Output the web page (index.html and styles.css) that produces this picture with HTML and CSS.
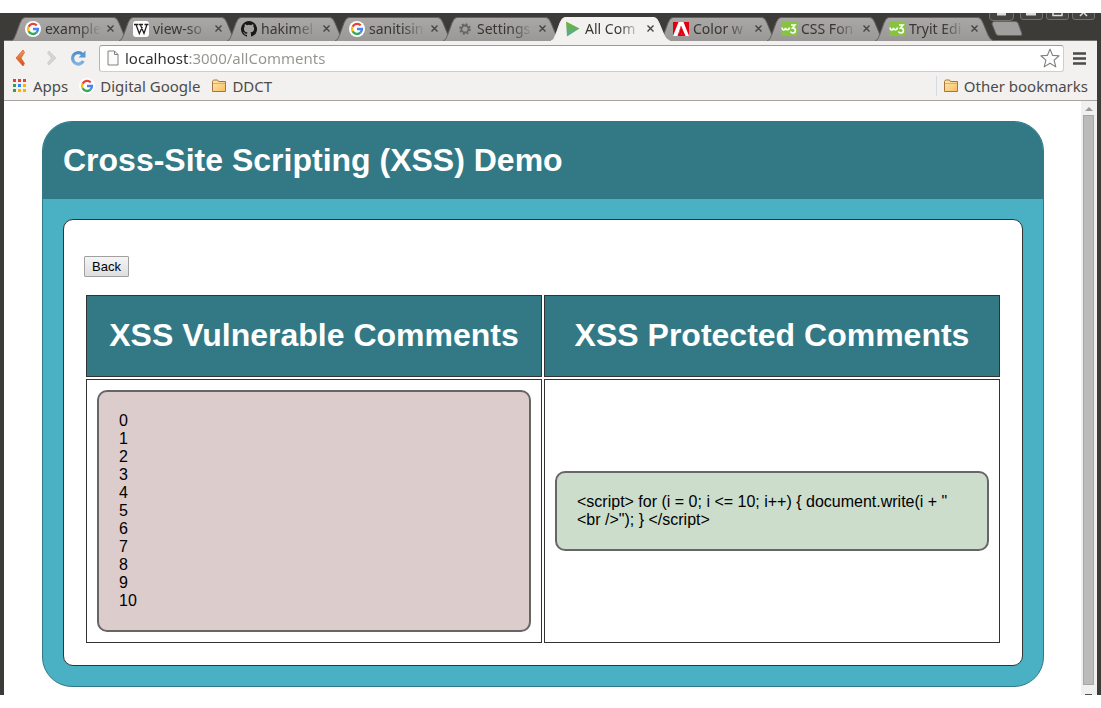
FILE: index.html
```html
<!DOCTYPE html>
<html lang="en">
<head>
<meta charset="utf-8">
<title>All Comments</title>
<link rel="stylesheet" href="styles.css">
</head>
<body>
<svg class="defs" aria-hidden="true">
  <defs>
    <linearGradient id="tabfill" x1="0" y1="0" x2="0" y2="1"><stop offset="0" stop-color="#a9a8a6"/><stop offset="1" stop-color="#999896"/></linearGradient>
    <linearGradient id="orange" x1="0" y1="0" x2="0" y2="1"><stop offset="0" stop-color="#f09a5c"/><stop offset="1" stop-color="#dc4a14"/></linearGradient>
    <linearGradient id="blue" x1="0" y1="0" x2="0" y2="1"><stop offset="0" stop-color="#4f8fcd"/><stop offset="1" stop-color="#82b1e0"/></linearGradient>
    <linearGradient id="folderfill" x1="0" y1="0" x2="1" y2="1"><stop offset="0" stop-color="#ffe9ae"/><stop offset="1" stop-color="#f8bd62"/></linearGradient>
    <linearGradient id="playfill" x1="0" y1="0" x2="0" y2="1"><stop offset="0" stop-color="#6db52d"/><stop offset="1" stop-color="#58a9a0"/></linearGradient>
  </defs>
  <symbol id="shape" viewBox="0 0 120 24"><path d="M0 24C3 23 3 21 5 17L9 6Q11 .5 14 .5H103Q106 .5 108 6L113 18Q115 23 119 24"/></symbol>
  <symbol id="google" viewBox="0 0 16 16"><circle cx="8" cy="8" r="8" fill="#fff"/><g fill="none" stroke-width="2.3"><path d="M11.7 4.4A5 5 0 0 0 3.6 5.8" stroke="#ea4335"/><path d="M3.6 5.8A5 5 0 0 0 3.6 10.3" stroke="#fbbc05"/><path d="M3.6 10.3A5 5 0 0 0 11.4 11.7" stroke="#34a853"/><path d="M11.4 11.7A5 5 0 0 0 13 8H8" stroke="#4285f4"/></g></symbol>
  <symbol id="wiki" viewBox="0 0 16 16"><rect width="16" height="16" rx="3" fill="#fff"/><path d="M1 3.5H5.5M6 3.5H10M11.5 3.5H15.500M3 3.500L6.300 12.500L9.300 6M7.300 3.500L11 12.500L14 3.500" fill="none" stroke="#222" stroke-width="1.300"/></symbol>
  <symbol id="github" viewBox="0 0 16 16"><path fill="#181818" fill-rule="evenodd" d="M8 0a8 8 0 0 0-2.530 15.590c.4.070.55-.17.55-.38v-1.490c-2.230.48-2.700-.95-2.700-.95-.36-.92-.89-1.170-.89-1.170-.73-.5.050-.49.050-.49.81.060 1.230.83 1.230.83.72 1.230 1.880.87 2.340.67.070-.52.280-.88.510-1.080-1.780-.2-3.640-.89-3.640-3.950 0-.87.310-1.590.82-2.150-.08-.2-.36-1.020.08-2.120 0 0 .67-.21 2.200.82a7.600 7.600 0 0 1 4 0c1.530-1.040 2.200-.82 2.200-.82.44 1.100.16 1.920.08 2.120.51.560.82 1.270.82 2.150 0 3.070-1.870 3.750-3.650 3.950.29.250.54.730.54 1.480v2.200c0 .21.150.46.550.38A8 8 0 0 0 8 0z"/></symbol>
  <symbol id="gear" viewBox="0 0 16 16"><g fill="none" stroke="#666564"><circle cx="8" cy="8" r="3.500" stroke-width="1.800"/><circle cx="8" cy="8" r="4.900" stroke-width="1.800" stroke-dasharray="2 1.850"/></g></symbol>
  <symbol id="play" viewBox="0 0 16 16"><path d="M1 .5L14.500 7.500L2 15.500Z" fill="url(#playfill)"/></symbol>
  <symbol id="adobe" viewBox="0 0 16 16"><rect y="1" width="16" height="14" fill="#e1000f"/><path d="M5.500 1H10.500L16 15H12.500L8 4.500L4.500 15H0ZM8 6L11.500 15H9.300L8.300 12H6Z" fill="#fff"/><path d="M8 5.500L12 15H9.200L8.200 12H6Z" fill="#e1000f"/></symbol>
  <symbol id="w3" viewBox="0 0 16 16"><rect y="1" width="16" height="14" fill="#86c440"/><path d="M1 6.500C1.500 10 4 9.500 4.500 7C5 9.500 8 9.500 8.500 6.500M10 4H14L11.500 7C15.500 7 15 12 12 12Q10 12 9.500 10.500" fill="none" stroke="#fff" stroke-width="1.600"/></symbol>
  <symbol id="close" viewBox="0 0 9 9"><path d="M1.500 1.500L7.500 7.500M7.500 1.500L1.500 7.500" stroke="#454442" stroke-width="1.400"/></symbol>
  <symbol id="folder" viewBox="0 0 16 14"><path d="M1.500 12.500V2.500L2.500 1H6.500L7.500 2.500H14.500V12.500Z" fill="url(#folderfill)" stroke="#a8743a"/><path d="M2 4.500H14" stroke="#d7a259" stroke-width=".8"/></symbol>
</svg>
<div class="window">
  <div class="tabstrip">
    <div class="tab"><svg class="shape"><use href="#shape"/></svg><svg class="icon"><use href="#google"/></svg><span class="title">example</span><button class="close" aria-label="Close"><svg><use href="#close"/></svg></button></div>
    <div class="tab"><svg class="shape"><use href="#shape"/></svg><svg class="icon"><use href="#wiki"/></svg><span class="title">view-so</span><button class="close" aria-label="Close"><svg><use href="#close"/></svg></button></div>
    <div class="tab"><svg class="shape"><use href="#shape"/></svg><svg class="icon"><use href="#github"/></svg><span class="title">hakimel</span><button class="close" aria-label="Close"><svg><use href="#close"/></svg></button></div>
    <div class="tab"><svg class="shape"><use href="#shape"/></svg><svg class="icon"><use href="#google"/></svg><span class="title">sanitisin</span><button class="close" aria-label="Close"><svg><use href="#close"/></svg></button></div>
    <div class="tab"><svg class="shape"><use href="#shape"/></svg><svg class="icon"><use href="#gear"/></svg><span class="title">Settings</span><button class="close" aria-label="Close"><svg><use href="#close"/></svg></button></div>
    <div class="tab active"><svg class="shape"><use href="#shape"/></svg><svg class="icon"><use href="#play"/></svg><span class="title">All Com</span><button class="close" aria-label="Close"><svg><use href="#close"/></svg></button></div>
    <div class="tab"><svg class="shape"><use href="#shape"/></svg><svg class="icon"><use href="#adobe"/></svg><span class="title">Color w</span><button class="close" aria-label="Close"><svg><use href="#close"/></svg></button></div>
    <div class="tab"><svg class="shape"><use href="#shape"/></svg><svg class="icon"><use href="#w3"/></svg><span class="title">CSS Fon</span><button class="close" aria-label="Close"><svg><use href="#close"/></svg></button></div>
    <div class="tab"><svg class="shape"><use href="#shape"/></svg><svg class="icon"><use href="#w3"/></svg><span class="title">Tryit Edi</span><button class="close" aria-label="Close"><svg><use href="#close"/></svg></button></div>
    <button class="newtab" aria-label="New tab"><svg viewBox="0 0 32 16"><path d="M3 .5H24Q26 .5 27 2L31 13Q31 14.500 29 14.500H8Q6 14.500 5 13L1 3Q1 .5 3 .5Z" fill="#a09f9d" stroke="#64635f"/></svg></button>
    <div class="controls">
      <svg viewBox="0 0 106 8"><g fill="#454440" stroke="#75736d"><path d="M.5 0V4Q.5 7.500 4 7.500H21Q24.500 7.500 24.500 4V0M31.500 0V4Q31.500 6.500 34 6.500H51Q53.500 6.500 53.500 4V0M57.500 0V4Q57.500 6.500 60 6.500H77Q79.500 6.500 79.500 4V0M83.500 0V4Q83.500 6.500 86 6.500H103Q105.500 6.500 105.500 4V0"/></g><path d="M8 0H17V2.500H8ZM37 0H47V2.500H37Z" fill="#deddd8"/><path d="M64 0V2.500H73V0M91 3L94 0M98 3L95 0" fill="none" stroke="#deddd8" stroke-width="1.500"/></svg>
    </div>
  </div>
  <div class="toolbar">
    <button class="tool" aria-label="Back"><svg viewBox="0 0 16 18"><path d="M11 1L4 9L11 17L12.500 14.500L9 9L12.500 3.500Z" fill="url(#orange)" stroke="#cf5a27" stroke-width=".7"/></svg></button>
    <button class="tool" aria-label="Forward"><svg viewBox="0 0 16 18"><path d="M8 2L15 9L8 16L6.500 14L10.500 9L6.500 4Z" fill="#d5d4d2" stroke="#c8c7c5" stroke-width=".7"/></svg></button>
    <button class="tool" aria-label="Reload"><svg viewBox="0 0 16 18"><path d="M12.500 5.500A5.700 5.700 0 1 0 13.300 12" fill="none" stroke="url(#blue)" stroke-width="3.200"/><path d="M15.500 1.500V8.500H8.500Z" fill="#5b97d2"/></svg></button>
    <div class="omnibox">
      <svg class="page-icon" viewBox="0 0 12 16"><path d="M1 1H7.500L11 4.500V15H1ZM7.500 1V4.500H11" fill="#fbfbfb" stroke="#83827f"/></svg>
      <input type="text" aria-label="Address" value="localhost:3000/allComments">
      <button class="star" aria-label="Bookmark"><svg viewBox="0 0 18 18"><path d="M9 1L11.300 6.600L17.200 7L12.700 10.900L14.200 17L9 13.700L3.800 17L5.300 10.900L.8 7L6.700 6.600Z" fill="#fff" stroke="#7f7e7c" stroke-linejoin="round"/></svg></button>
    </div>
    <button class="menu" aria-label="Menu"><svg viewBox="0 0 13 13"><path d="M0 1.500H13M0 6.500H13M0 11.500H13" stroke="#4b4a48" stroke-width="2.600"/></svg></button>
  </div>
  <div class="bookmarks">
    <a href="#"><svg class="apps" viewBox="0 0 13 13"><path fill="#e8402f" d="M0 0h3v3H0zM5 0h3v3H5zM10 0h3v3h-3z"/><path fill="#34a04f" d="M0 5h3v3H0zM0 10h3v3H0z"/><path fill="#2f86ee" d="M5 5h3v3H5z"/><path fill="#f5b400" d="M10 5h3v3h-3zM5 10h3v3H5zM10 10h3v3h-3z"/></svg>Apps</a>
    <a href="#"><svg class="icon"><use href="#google"/></svg>Digital Google</a>
    <a href="#"><svg class="folder"><use href="#folder"/></svg>DDCT</a>
    <a href="#" class="other"><svg class="folder"><use href="#folder"/></svg>Other bookmarks</a>
  </div>
  <div class="viewport">
    <main>
      <div class="demo">
        <header><h1>Cross-Site Scripting (XSS) Demo</h1></header>
        <section class="panel">
          <button class="back">Back</button>
          <table>
            <thead><tr><th>XSS Vulnerable Comments</th><th>XSS Protected Comments</th></tr></thead>
            <tbody><tr>
              <td><div class="comment vulnerable">0<br>1<br>2<br>3<br>4<br>5<br>6<br>7<br>8<br>9<br>10</div></td>
              <td><div class="comment protected">&lt;script&gt; for (i = 0; i &lt;= 10; i++) { document.write(i + "<wbr>&lt;br /&gt;"); } &lt;/script&gt;</div></td>
            </tr></tbody>
          </table>
        </section>
      </div>
    </main>
    <div class="scrollbar"><i class="up"></i><i class="thumb"></i><i class="down"></i></div>
  </div>
</div>
</body>
</html>
```
FILE: styles.css
```css
* { box-sizing: border-box; }
body {
  margin: 0;
  padding: 13px 0;
  background: #fff;
  font-family: "Liberation Sans", Arial, sans-serif;
  font-size: 16px;
}
svg { display: block; flex: none; }
button { margin: 0; padding: 0; border: 0; background: none; }
.defs { position: absolute; width: 0; height: 0; }
.window {
  border: solid #3c3b37;
  border-width: 0 4px;
  background: #f2f1f0;
}

/* Tab strip */
.tabstrip {
  display: flex;
  height: 28px;
  padding: 4px 0 0 7px;
  background: #3c3b37;
  border-bottom: 1px solid #73726f;
  font: 14px/22px "Noto Sans", sans-serif;
  color: #3a3630;
}
.tab {
  position: relative;
  display: flex;
  align-items: center;
  flex: none;
  width: 120px;
  height: 23px;
  margin-right: -12px;
  padding-left: 14px;
}
.tab .shape {
  position: absolute;
  inset: 0;
  width: 120px;
  height: 24px;
  fill: url(#tabfill);
  stroke: #64635f;
}
.tab.active { z-index: 1; }
.tab.active .shape { fill: #f2f1f0; stroke: #f2f1f0; }
.icon { width: 16px; height: 16px; }
.tab .icon { position: relative; }
.title {
  position: relative;
  width: 58px;
  margin-left: 4px;
  overflow: hidden;
  white-space: nowrap;
  mask-image: linear-gradient(to right, #000 34px, transparent 56px);
}
.close { position: relative; margin-left: 3px; }
.close svg { width: 9px; height: 9px; }
.newtab { align-self: flex-start; margin: 4px 0 0 8px; }
.newtab svg { width: 32px; height: 16px; }
.controls { margin: -4px 0 0 -34px; }
.controls svg { width: 106px; height: 8px; }

/* Toolbar */
.toolbar {
  display: flex;
  align-items: center;
  height: 34px;
  padding: 0 11px 0 8px;
}
.tool { margin-right: 13px; }
.tool svg { width: 16px; height: 18px; }
.omnibox {
  display: flex;
  flex: 1;
  align-items: center;
  height: 27px;
  padding: 0 3px 0 7px;
  border: 1px solid #cfceca;
  border-top-color: #9b9a97;
  border-left-color: #b5b4b1;
  border-radius: 3px;
  background: #fff;
}
.page-icon { width: 12px; height: 16px; }
.omnibox input {
  flex: 1;
  min-width: 0;
  margin-left: 6px;
  padding: 0;
  border: 0;
  outline: 0;
  font: 15px/22px "Noto Sans", sans-serif;
  color: transparent;
  background: linear-gradient(to right, #2e2d2b 64px, #94938f 64px);
  background-clip: text;
}
.star svg { width: 20px; height: 20px; }
.menu { margin-left: 9px; }
.menu svg { width: 13px; height: 13px; }

/* Bookmarks bar */
.bookmarks {
  display: flex;
  align-items: center;
  height: 26px;
  padding: 0 9px 4px;
  border-bottom: 1px solid #a5a4a2;
  font: 15px/20px "Noto Sans", sans-serif;
}
.bookmarks a {
  display: flex;
  align-items: center;
  gap: 5px;
  margin-right: 11px;
  color: #4c4b48;
  text-decoration: none;
}
.apps { width: 13px; height: 13px; margin-right: 2px; }
.folder { width: 16px; height: 14px; }
.bookmarks .other {
  margin: 0 0 0 auto;
  padding-left: 6px;
  border-left: 1px solid #d5dae0;
}

/* Page */
.viewport { display: flex; background: #fff; }
main { flex: 1; padding: 20px 37px 8px 38px; }
.demo {
  overflow: hidden;
  padding-bottom: 20px;
  border: 1px solid #337985;
  border-radius: 30px;
  background: #4ab0c4;
}
header { padding: 20px; background: #337985; }
h1 { margin: 0; font-size: 32px; line-height: 37px; color: #fff; }
.panel {
  margin: 20px 20px 0;
  padding: 36px 20px 20px;
  border: 1px solid #333;
  border-radius: 10px;
  background: #fff;
}
.back {
  display: block;
  height: 21px;
  padding: 0 7px;
  border: 1px solid #a0a0a0;
  border-radius: 1px;
  background: linear-gradient(#f5f5f5, #dedede);
  font: 13px/19px "Liberation Sans", Arial, sans-serif;
  color: #000;
}
table {
  width: 100%;
  margin-top: 16px;
  border-spacing: 2px;
  table-layout: fixed;
}
th {
  padding: 21px 0 22px;
  border: 1px solid #333;
  background: #337985;
  color: #fff;
  font-size: 32px;
  line-height: 37px;
}
td { padding: 10px; border: 1px solid #333; }
.comment {
  padding: 20px;
  border: 2px solid #666;
  border-radius: 10px;
  line-height: 18px;
}
.vulnerable { background: #dcc; }
.protected { background: #cdc; }

/* Scrollbar */
.scrollbar {
  display: flex;
  flex-direction: column;
  align-items: center;
  width: 16px;
  padding: 6px 1px 0 0;
  background: #f0f0f0;
}
.up {
  border: solid transparent;
  border-width: 0 4px 4px;
  border-bottom-color: #9a9a9a;
}
.thumb {
  flex: 1;
  width: 11px;
  margin: 4px 0 9px;
  border: 1px solid #a6a6a6;
  background: #bbb;
}
.down { width: 7px; height: 1px; background: #505050; }
```
